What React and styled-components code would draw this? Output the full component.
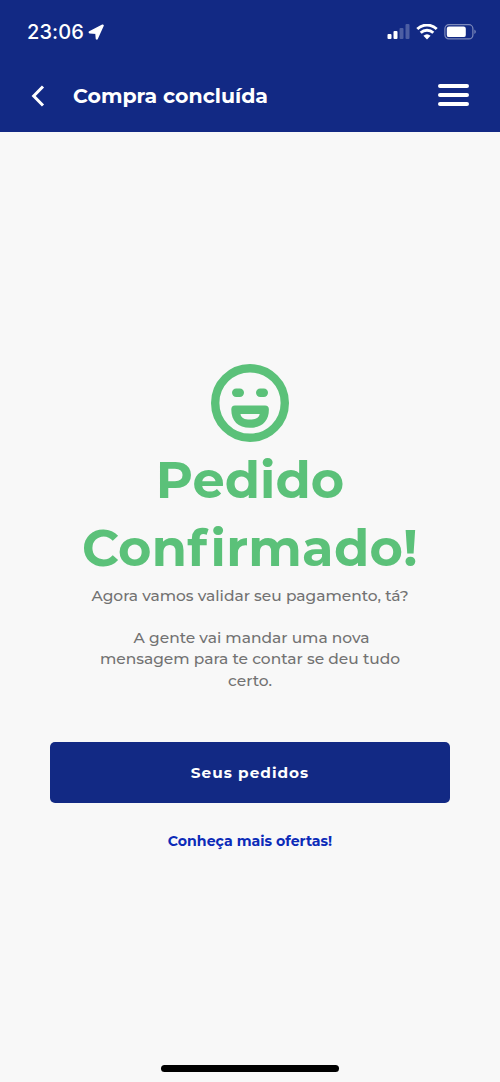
import React from 'react'
import styled, { createGlobalStyle } from 'styled-components'

const GlobalStyle = createGlobalStyle`
  * {
    box-sizing: border-box;
  }

  body {
    margin: 0;
    background: #f8f8f8;
    font-family: Montserrat, Inter, sans-serif;
  }
`

const Screen = styled.div`
  display: flex;
  flex-direction: column;
  width: 500px;
  height: 1082px;
  overflow: hidden;
  background: #f8f8f8;
`

const Header = styled.header`
  height: 132px;
  background: #122984;
  color: #fff;
`

const StatusBar = styled.div`
  display: flex;
  align-items: center;
  justify-content: space-between;
  height: 64px;
  padding: 0 24px 0 27px;
`

const Clock = styled.div`
  display: flex;
  align-items: center;
  gap: 4px;
  font-family: Inter, sans-serif;
  font-size: 20px;
  font-weight: 500;
  letter-spacing: 0.1px;
`

const StatusIcons = styled.div`
  display: flex;
  align-items: center;
`

const NavBar = styled.div`
  display: flex;
  align-items: center;
  height: 62px;
  padding: 0 31px;
`

const IconButton = styled.button`
  display: flex;
  padding: 0;
  border: 0;
  background: none;
  color: inherit;
`

const PageTitle = styled.h1`
  flex: 1;
  margin: 0 0 0 28px;
  padding-top: 2px;
  font-size: 20.5px;
  font-weight: 700;
  line-height: 26px;
`

const Content = styled.main`
  display: flex;
  flex: 1;
  flex-direction: column;
  align-items: center;
  padding: 232px 50px 0;
`

const Heading = styled.h2`
  margin: 4px 0 0;
  color: #5bc179;
  font-size: 51px;
  font-weight: 700;
  font-variant-ligatures: none;
  line-height: 68px;
  text-align: center;
`

const Line = styled.span`
  display: block;
  padding-left: ${props => props.indent || 0}px;
  white-space: nowrap;
  letter-spacing: ${props => props.spacing || 0}px;
`

const WideLetter = styled.span`
  letter-spacing: 3.6px;
`

const Message = styled.p`
  margin: ${props => props.top || 0}px 0 0;
  color: #727272;
  font-size: 15.45px;
  font-weight: 500;
  line-height: 21.3px;
  text-align: center;
`

const PrimaryButton = styled.button`
  width: 400px;
  height: 61px;
  margin-top: 51px;
  padding: 1px 0 0;
  border: 0;
  border-radius: 5px;
  background: #122984;
  color: #fff;
  font-family: inherit;
  font-size: 15.3px;
  font-weight: 700;
`

const OffersLink = styled.a`
  margin-top: 28px;
  color: #0c2bb8;
  font-size: 14.15px;
  font-weight: 700;
  line-height: 21px;
`

const HomeIndicator = styled.div`
  width: 178px;
  height: 7px;
  margin: 0 auto 10px;
  border-radius: 4px;
  background: #000;
`

const LocationIcon = () => (
  <svg width="17" height="17" viewBox="0 0 17 17" fill="#fff" stroke="#fff" strokeLinejoin="round">
    <path d="M14.7 1.6 8.8 14.6 8.3 8.9 1.7 8.3Z" strokeWidth="2.2" />
  </svg>
)

const SignalIcon = () => (
  <svg width="23" height="17" viewBox="0 0 23 17" fill="#fff">
    <rect x="0.5" y="10" width="4" height="5" rx="1" />
    <rect x="6.5" y="7" width="4" height="8" rx="1" />
    <rect x="12.5" y="4" width="4" height="11" rx="1" opacity="0.25" />
    <rect x="18.5" y="0" width="4" height="15" rx="1" opacity="0.25" />
  </svg>
)

const WifiIcon = styled.svg`
  margin-left: 6px;
`

const BatteryIcon = styled.svg`
  margin-left: 6px;
`

const App = () => (
  <>
    <GlobalStyle />
    <Screen>
      <Header>
        <StatusBar>
          <Clock>
            23:06
            <LocationIcon />
          </Clock>
          <StatusIcons>
            <SignalIcon />
            <WifiIcon width="22" height="17" viewBox="0 0 22 17">
              <g fill="none" stroke="#fff" strokeWidth="2.9">
                <path d="M1.3 5a14 14 0 0 1 19.4 0" />
                <path d="M4.7 8.7a9.2 9.2 0 0 1 12.6 0" />
              </g>
              <path fill="#fff" d="M7.4 11.8a5.4 5.4 0 0 1 7.2 0L11 15.4Z" />
            </WifiIcon>
            <BatteryIcon width="32" height="17" viewBox="0 0 32 17">
              <rect x="0.9" y="0.7" width="28" height="14.2" rx="4" fill="none" stroke="#fff" strokeOpacity="0.45" strokeWidth="1.2" />
              <rect x="2.8" y="2.5" width="19" height="10.6" rx="2.2" fill="#fff" />
              <path d="M30.4 5.5v4.6Q31.8 9.3 31.8 7.8T30.4 5.5Z" fill="#fff" opacity="0.45" />
            </BatteryIcon>
          </StatusIcons>
        </StatusBar>
        <NavBar>
          <IconButton aria-label="Voltar">
            <svg width="14" height="24" viewBox="0 0 14 24">
              <path d="M12 3.5 2.7 13l9.3 9.5" fill="none" stroke="#fff" strokeWidth="3" />
            </svg>
          </IconButton>
          <PageTitle>
            <Line>Compra concluída</Line>
          </PageTitle>
          <IconButton aria-label="Menu">
            <svg width="31" height="24" viewBox="0 0 31 24">
              <path d="M2 3h27M2 12h27M2 21h27" stroke="#fff" strokeWidth="4" strokeLinecap="round" />
            </svg>
          </IconButton>
        </NavBar>
      </Header>
      <Content>
        <svg width="78" height="78" viewBox="0 0 78 78">
          <circle cx="39" cy="39" r="34.8" fill="none" stroke="#5bc179" strokeWidth="8.4" />
          <rect x="21" y="24.5" width="12" height="8.5" rx="4.2" fill="#5bc179" />
          <rect x="45" y="24.5" width="12" height="8.5" rx="4.2" fill="#5bc179" />
          <path
            fill="#5bc179"
            fillRule="evenodd"
            d="M24 41.5H54Q57.9 41.5 57.9 45.5C57.9 57 51 63.8 39 63.8S20.3 57 20.3 45.5Q20.3 41.5 24 41.5ZM29.5 50C30 54 33.5 55.6 39 55.6S48 54 48.7 50Z"
          />
        </svg>
        <Heading>
          <Line>Pedido</Line>
          <Line spacing={0.25}>
            Con<WideLetter>f</WideLetter>irmado!
          </Line>
        </Heading>
        <Message top={3}>
          <Line>Agora vamos validar seu pagamento, tá?</Line>
        </Message>
        <Message top={20.7}>
          <Line indent={3}>A gente vai mandar uma nova</Line>
          <Line>mensagem para te contar se deu tudo</Line>
          <Line>certo.</Line>
        </Message>
        <PrimaryButton>
          <Line spacing={1}>Seus pedidos</Line>
        </PrimaryButton>
        <OffersLink>
          <Line>Conheça mais ofertas!</Line>
        </OffersLink>
      </Content>
      <HomeIndicator />
    </Screen>
  </>
)

export default App
